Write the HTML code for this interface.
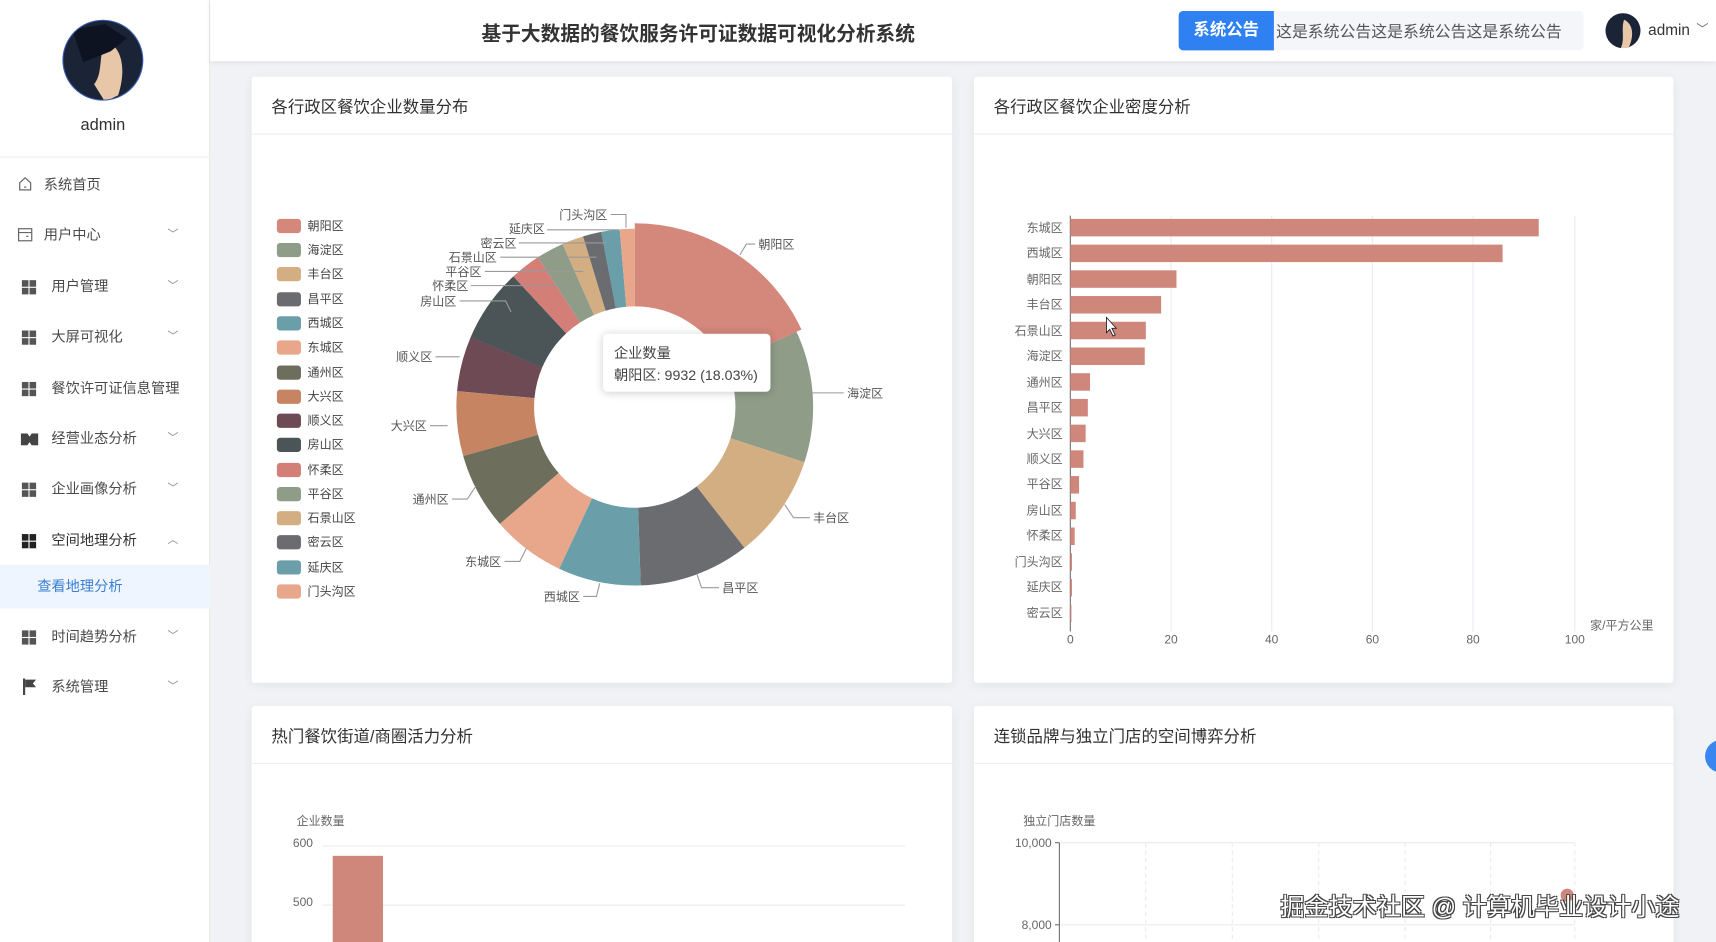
<!DOCTYPE html>
<html><head><meta charset="utf-8">
<style>
*{margin:0;padding:0;box-sizing:border-box}
html,body{width:1716px;height:942px;overflow:hidden;background:#f0f2f5}
body{font-family:"Liberation Sans","Noto Sans CJK SC",sans-serif}
#w{position:absolute;left:0;top:0;width:1568px;height:861px;transform:scale(1.0944);transform-origin:0 0;background:#f0f2f5;overflow:hidden}
.ab{position:absolute}
#side{left:0;top:0;width:192px;height:861px;background:#fff;border-right:1px solid #e8e8e8}
.mi{position:absolute;left:0;width:192px;font-size:13px;color:#4a4a4a;height:20px;line-height:20px}
.mi .t{position:absolute;left:47px}
.mi .ic{position:absolute;left:20px;top:4px}
.mi .ch{position:absolute;left:153px;top:0;font-size:10px;color:#888}
.g{width:13px;height:13px;display:grid;grid-template-columns:6px 6px;gap:1px}
.g i{background:#555;display:block}
#hdr{left:192px;top:0;width:1376px;height:56px;background:#fff;box-shadow:0 1px 4px rgba(0,0,0,.08)}
.card{position:absolute;background:#fff;border-radius:3px;box-shadow:0 2px 10px rgba(0,0,0,.06)}
.card .h{position:absolute;left:18px;top:17px;font-size:15px;color:#303133}
.card .ln{position:absolute;left:0;right:0;top:52px;border-top:1px solid #ebeef5}
.lg{position:absolute;left:253px;font-size:11px;color:#444}
.lg i{position:absolute;left:0;top:2px;width:22px;height:13px;border-radius:3px}
.lg span{position:absolute;left:28px;top:0;white-space:nowrap}
svg text{font-family:"Liberation Sans","Noto Sans CJK SC",sans-serif}
</style></head><body><div id="w">

<div id="side" class="ab">
  <svg class="ab" style="left:56px;top:17px" width="76" height="76"><defs><clipPath id="cp"><circle cx="38" cy="38" r="36"/></clipPath></defs>
  <circle cx="38" cy="38" r="37" fill="#3a5fb0"/><g clip-path="url(#cp)"><rect width="76" height="76" fill="#1b2436"/><path d="M40 20 C55 25 60 45 52 70 L40 76 L30 60 C38 50 34 35 40 20Z" fill="#e8c7a8"/><path d="M10 10 L40 5 L60 18 L45 30 L20 40Z" fill="#0e1322"/></g></svg>
  <div class="ab" style="left:0;width:188px;top:106px;text-align:center;font-size:15px;color:#303133">admin</div>
  <div class="ab" style="left:0;top:143px;width:192px;border-top:1px solid #eee"></div>
  <div class="mi" style="top:159px"><svg class="ic" style="left:16px;top:2px" width="14" height="14" viewBox="0 0 14 14"><path d="M2 6 L7 1.5 L12 6 V12.5 H2Z M6 10 h2" fill="none" stroke="#666" stroke-width="1.1"/></svg><span class="t" style="left:40px">系统首页</span></div>
  <div class="mi" style="top:205px"><svg class="ic" style="left:16px;top:3px" width="14" height="13" viewBox="0 0 14 13"><rect x="1" y="1" width="12" height="11" fill="none" stroke="#666" stroke-width="1.1"/><path d="M1 4.5h12 M8 8h2" stroke="#666" stroke-width="1.1"/></svg><span class="t" style="left:40px">用户中心</span><span class="ch">﹀</span></div>
  <div class="mi" style="top:252px"><div class="ic g"><i></i><i></i><i></i><i></i></div><span class="t">用户管理</span><span class="ch">﹀</span></div>
  <div class="mi" style="top:298px"><div class="ic g"><i></i><i></i><i></i><i></i></div><span class="t">大屏可视化</span><span class="ch">﹀</span></div>
  <div class="mi" style="top:345px"><div class="ic g"><i></i><i></i><i></i><i></i></div><span class="t">餐饮许可证信息管理</span></div>
  <div class="mi" style="top:391px"><svg class="ic" style="left:19px;top:5px" width="16" height="11"><path d="M0 0h6l2 3 2-3h6v11h-6l-2-3-2 3H0z" fill="#444"/></svg><span class="t">经营业态分析</span><span class="ch">﹀</span></div>
  <div class="mi" style="top:437px"><div class="ic g"><i></i><i></i><i></i><i></i></div><span class="t">企业画像分析</span><span class="ch">﹀</span></div>
  <div class="mi" style="top:484px;color:#303133"><div class="ic g"><i style="background:#222"></i><i style="background:#222"></i><i style="background:#222"></i><i style="background:#222"></i></div><span class="t">空间地理分析</span><span class="ch">︿</span></div>
  <div class="ab" style="left:0;top:516px;width:192px;height:40px;background:#eef5ff"></div>
  <div class="mi" style="top:526px;color:#3a7fd5"><span class="t" style="left:34px">查看地理分析</span></div>
  <div class="mi" style="top:572px"><div class="ic g"><i></i><i></i><i></i><i></i></div><span class="t">时间趋势分析</span><span class="ch">﹀</span></div>
  <div class="mi" style="top:618px"><svg class="ic" style="left:21px;top:2px" width="13" height="15"><path d="M1 0v15" stroke="#444" stroke-width="2"/><path d="M2 1h10l-3 3.5 3 3.5H2z" fill="#444"/></svg><span class="t">系统管理</span><span class="ch">﹀</span></div>
</div>

<div id="hdr" class="ab">
  <div class="ab" style="left:248px;top:17px;font-size:18px;font-weight:bold;color:#333;white-space:nowrap">基于大数据的餐饮服务许可证数据可视化分析系统</div>
  <div class="ab" style="left:885px;top:10px;width:370px;height:36px;background:#f4f6fa;border-radius:4px"></div>
  <div class="ab" style="left:885px;top:10px;width:87px;height:36px;background:#2f80f0;border-radius:4px 0 0 4px;color:#fff;font-weight:bold;font-size:15px;line-height:36px;text-align:center">系统公告</div>
  <div class="ab" style="left:974px;top:18px;font-size:14.5px;color:#555;white-space:nowrap">这是系统公告这是系统公告这是系统公告</div>
  <svg class="ab" style="left:1275px;top:12px" width="32" height="32"><circle cx="16" cy="16" r="16" fill="#1b2436"/><path d="M17 6 C26 10 26 22 21 32 L14 32 C18 24 14 14 17 6Z" fill="#e8c7a8"/></svg>
  <div class="ab" style="left:1314px;top:19px;font-size:14px;color:#333">admin</div>
  <div class="ab" style="left:1358px;top:18px;font-size:11px;color:#666">﹀</div>
</div>

<!-- card 1 -->
<div class="card" style="left:230px;top:70px;width:640px;height:554px"><div class="h">各行政区餐饮企业数量分布</div><div class="ln"></div></div>
<div class="lg" style="top:198px"><i style="background:#d4877b"></i><span>朝阳区</span></div>
<div class="lg" style="top:220px"><i style="background:#8e9c88"></i><span>海淀区</span></div>
<div class="lg" style="top:242px"><i style="background:#d4ae83"></i><span>丰台区</span></div>
<div class="lg" style="top:265px"><i style="background:#6b6c70"></i><span>昌平区</span></div>
<div class="lg" style="top:287px"><i style="background:#6a9ea8"></i><span>西城区</span></div>
<div class="lg" style="top:309px"><i style="background:#e8a78b"></i><span>东城区</span></div>
<div class="lg" style="top:332px"><i style="background:#6e6e5c"></i><span>通州区</span></div>
<div class="lg" style="top:354px"><i style="background:#c68462"></i><span>大兴区</span></div>
<div class="lg" style="top:376px"><i style="background:#6e4a54"></i><span>顺义区</span></div>
<div class="lg" style="top:398px"><i style="background:#4b5558"></i><span>房山区</span></div>
<div class="lg" style="top:421px"><i style="background:#d47e78"></i><span>怀柔区</span></div>
<div class="lg" style="top:443px"><i style="background:#8e9c88"></i><span>平谷区</span></div>
<div class="lg" style="top:465px"><i style="background:#d4ae83"></i><span>石景山区</span></div>
<div class="lg" style="top:487px"><i style="background:#6b6c70"></i><span>密云区</span></div>
<div class="lg" style="top:510px"><i style="background:#6a9ea8"></i><span>延庆区</span></div>
<div class="lg" style="top:532px"><i style="background:#e8a78b"></i><span>门头沟区</span></div>

<svg class="ab" style="left:0;top:0" width="870" height="620">
<g transform="rotate(-90 580 372)" fill="none" stroke-width="71">
<circle cx="580" cy="372" r="127.5" stroke="#8e9c88" stroke-dasharray="95.7 801.1" stroke-dashoffset="-144.6"/>
<circle cx="580" cy="372" r="127.5" stroke="#d4ae83" stroke-dasharray="75.7 801.1" stroke-dashoffset="-240.3"/>
<circle cx="580" cy="372" r="127.5" stroke="#6b6c70" stroke-dasharray="80.1 801.1" stroke-dashoffset="-316"/>
<circle cx="580" cy="372" r="127.5" stroke="#6a9ea8" stroke-dasharray="60.1 801.1" stroke-dashoffset="-396.1"/>
<circle cx="580" cy="372" r="127.5" stroke="#e8a78b" stroke-dasharray="53.4 801.1" stroke-dashoffset="-456.2"/>
<circle cx="580" cy="372" r="127.5" stroke="#6e6e5c" stroke-dasharray="55.6 801.1" stroke-dashoffset="-509.6"/>
<circle cx="580" cy="372" r="127.5" stroke="#c68462" stroke-dasharray="46.7 801.1" stroke-dashoffset="-565.2"/>
<circle cx="580" cy="372" r="127.5" stroke="#6e4a54" stroke-dasharray="40.1 801.1" stroke-dashoffset="-612"/>
<circle cx="580" cy="372" r="127.5" stroke="#4b5558" stroke-dasharray="53.4 801.1" stroke-dashoffset="-652"/>
<circle cx="580" cy="372" r="127.5" stroke="#d47e78" stroke-dasharray="22.3 801.1" stroke-dashoffset="-705.4"/>
<circle cx="580" cy="372" r="127.5" stroke="#8e9c88" stroke-dasharray="20 801.1" stroke-dashoffset="-727.7"/>
<circle cx="580" cy="372" r="127.5" stroke="#d4ae83" stroke-dasharray="15.6 801.1" stroke-dashoffset="-747.7"/>
<circle cx="580" cy="372" r="127.5" stroke="#6b6c70" stroke-dasharray="13.4 801.1" stroke-dashoffset="-763.3"/>
<circle cx="580" cy="372" r="127.5" stroke="#6a9ea8" stroke-dasharray="13.4 801.1" stroke-dashoffset="-776.6"/>
<circle cx="580" cy="372" r="127.5" stroke="#e8a78b" stroke-dasharray="11.1 801.1" stroke-dashoffset="-790"/>
<circle cx="580" cy="372" r="130" stroke="#d4877b" stroke-width="76" stroke-dasharray="147.5 816.8" stroke-dashoffset="0"/>
</g>
<g font-size="11" fill="#555">
<text x="511" y="200">门头沟区</text><text x="465" y="213">延庆区</text><text x="439" y="226">密云区</text><text x="410" y="239">石景山区</text><text x="407" y="252">平谷区</text><text x="395" y="265">怀柔区</text><text x="384" y="279">房山区</text>
<text x="693" y="227">朝阳区</text><text x="774" y="363">海淀区</text><text x="743" y="477">丰台区</text><text x="660" y="541">昌平区</text><text x="497" y="549">西城区</text><text x="425" y="517">东城区</text><text x="377" y="460">通州区</text><text x="357" y="393">大兴区</text><text x="362" y="330">顺义区</text>
</g>
<g fill="none" stroke="#999" stroke-width="1">
<path d="M558 196h14v12"/><path d="M500 210h65"/><path d="M474 222h80"/><path d="M457 235h88"/><path d="M443 248h90"/><path d="M430 261h92"/><path d="M420 275h42l5 10"/>
<path d="M690 223h-8l-6 10"/><path d="M771 359h-30"/><path d="M740 473h-15l-8-12"/><path d="M657 537h-16l-4-12"/><path d="M533 545h12l3-12"/><path d="M461 513h14l6-12"/><path d="M413 456h14l8-12"/><path d="M393 389h16"/><path d="M398 326h22"/>
</g>
</svg>
<div class="ab" style="left:551px;top:305px;width:153px;height:53px;background:#fff;border-radius:4px;box-shadow:0 1px 8px rgba(0,0,0,.2);font-size:13px;color:#444;padding:8px 10px;line-height:20px">企业数量<br>朝阳区: 9932 (18.03%)</div>

<!-- card 2 -->
<div class="card" style="left:890px;top:70px;width:639px;height:554px"><div class="h">各行政区餐饮企业密度分析</div><div class="ln"></div></div>
<svg class="ab" style="left:890px;top:180px" width="640" height="420">
<g stroke="#e8ebf0"><path d="M180 17v380M272 17v380M364 17v380M456 17v380M549 17v380"/></g>
<path d="M88 17v380" stroke="#6e7079"/>
<g fill="#d0877b">
<rect x="88" y="20" width="428" height="16"/><rect x="88" y="43.5" width="395" height="16"/><rect x="88" y="67" width="97" height="16"/><rect x="88" y="90.5" width="83" height="16"/><rect x="88" y="114" width="69" height="16"/><rect x="88" y="137.5" width="68" height="16"/><rect x="88" y="161" width="18" height="16"/><rect x="88" y="184.5" width="16" height="16"/><rect x="88" y="208" width="14" height="16"/><rect x="88" y="231.5" width="12" height="16"/><rect x="88" y="255" width="8" height="16"/><rect x="88" y="278.5" width="5" height="16"/><rect x="88" y="302" width="4" height="16"/><rect x="88" y="325.5" width="1.5" height="16"/><rect x="88" y="349" width="1.5" height="16"/><rect x="88" y="372.5" width="1" height="16"/>
</g>
<g font-size="11" fill="#666" text-anchor="end">
<text x="81" y="32">东城区</text><text x="81" y="55">西城区</text><text x="81" y="79">朝阳区</text><text x="81" y="102">丰台区</text><text x="81" y="126">石景山区</text><text x="81" y="149">海淀区</text><text x="81" y="173">通州区</text><text x="81" y="196">昌平区</text><text x="81" y="220">大兴区</text><text x="81" y="243">顺义区</text><text x="81" y="266">平谷区</text><text x="81" y="290">房山区</text><text x="81" y="313">怀柔区</text><text x="81" y="337">门头沟区</text><text x="81" y="360">延庆区</text><text x="81" y="384">密云区</text>
</g>
<g font-size="11" fill="#666" text-anchor="middle"><text x="88" y="408">0</text><text x="180" y="408">20</text><text x="272" y="408">40</text><text x="364" y="408">60</text><text x="456" y="408">80</text><text x="549" y="408">100</text></g>
<text x="563" y="395" font-size="11" fill="#666">家/平方公里</text>
<path d="M121 110v14l3-3 3 6 2-1-3-6h4z" fill="#fff" stroke="#222" stroke-width="0.8"/>
</svg>

<!-- card 3 -->
<div class="card" style="left:230px;top:645px;width:640px;height:240px"><div class="h">热门餐饮街道/商圈活力分析</div><div class="ln"></div></div>
<svg class="ab" style="left:230px;top:730px" width="640" height="140">
<text x="41" y="24" font-size="11" fill="#666">企业数量</text>
<path d="M65 43h532M65 97h532" stroke="#e8ebf0"/>
<text x="56" y="44" font-size="11" fill="#666" text-anchor="end">600</text><text x="56" y="98" font-size="11" fill="#666" text-anchor="end">500</text>
<rect x="74" y="52" width="46" height="90" fill="#d0877b"/>
</svg>

<!-- card 4 -->
<div class="card" style="left:890px;top:645px;width:639px;height:240px"><div class="h">连锁品牌与独立门店的空间博弈分析</div><div class="ln"></div></div>
<svg class="ab" style="left:890px;top:730px" width="640" height="140">
<text x="45" y="24" font-size="11" fill="#666">独立门店数量</text>
<g stroke="#e8ebf0" stroke-dasharray="4 3"><path d="M157 40v100M236 40v100M315 40v100M394 40v100M472 40v100M549 40v100"/></g>
<path d="M78 40h471M78 115h471" stroke="#e8ebf0"/>
<path d="M78 40v100" stroke="#6e7079"/><path d="M74 40h4M74 115h4" stroke="#6e7079"/>
<text x="71" y="44" font-size="11" fill="#666" text-anchor="end">10,000</text><text x="71" y="119" font-size="11" fill="#666" text-anchor="end">8,000</text>
<circle cx="542" cy="88" r="6" fill="#d0877b"/>
</svg>
<div class="ab" style="left:1558px;top:676px;width:30px;height:30px;border-radius:50%;background:#3a86f0"></div>
<div class="ab" style="left:1170px;top:811px;font-size:22px;color:#fff;white-space:nowrap;text-shadow:-1px -1px 0 #444,1px -1px 0 #444,-1px 1px 0 #444,1px 1px 0 #444">掘金技术社区 @ 计算机毕业设计小途</div>
</div></body></html>
